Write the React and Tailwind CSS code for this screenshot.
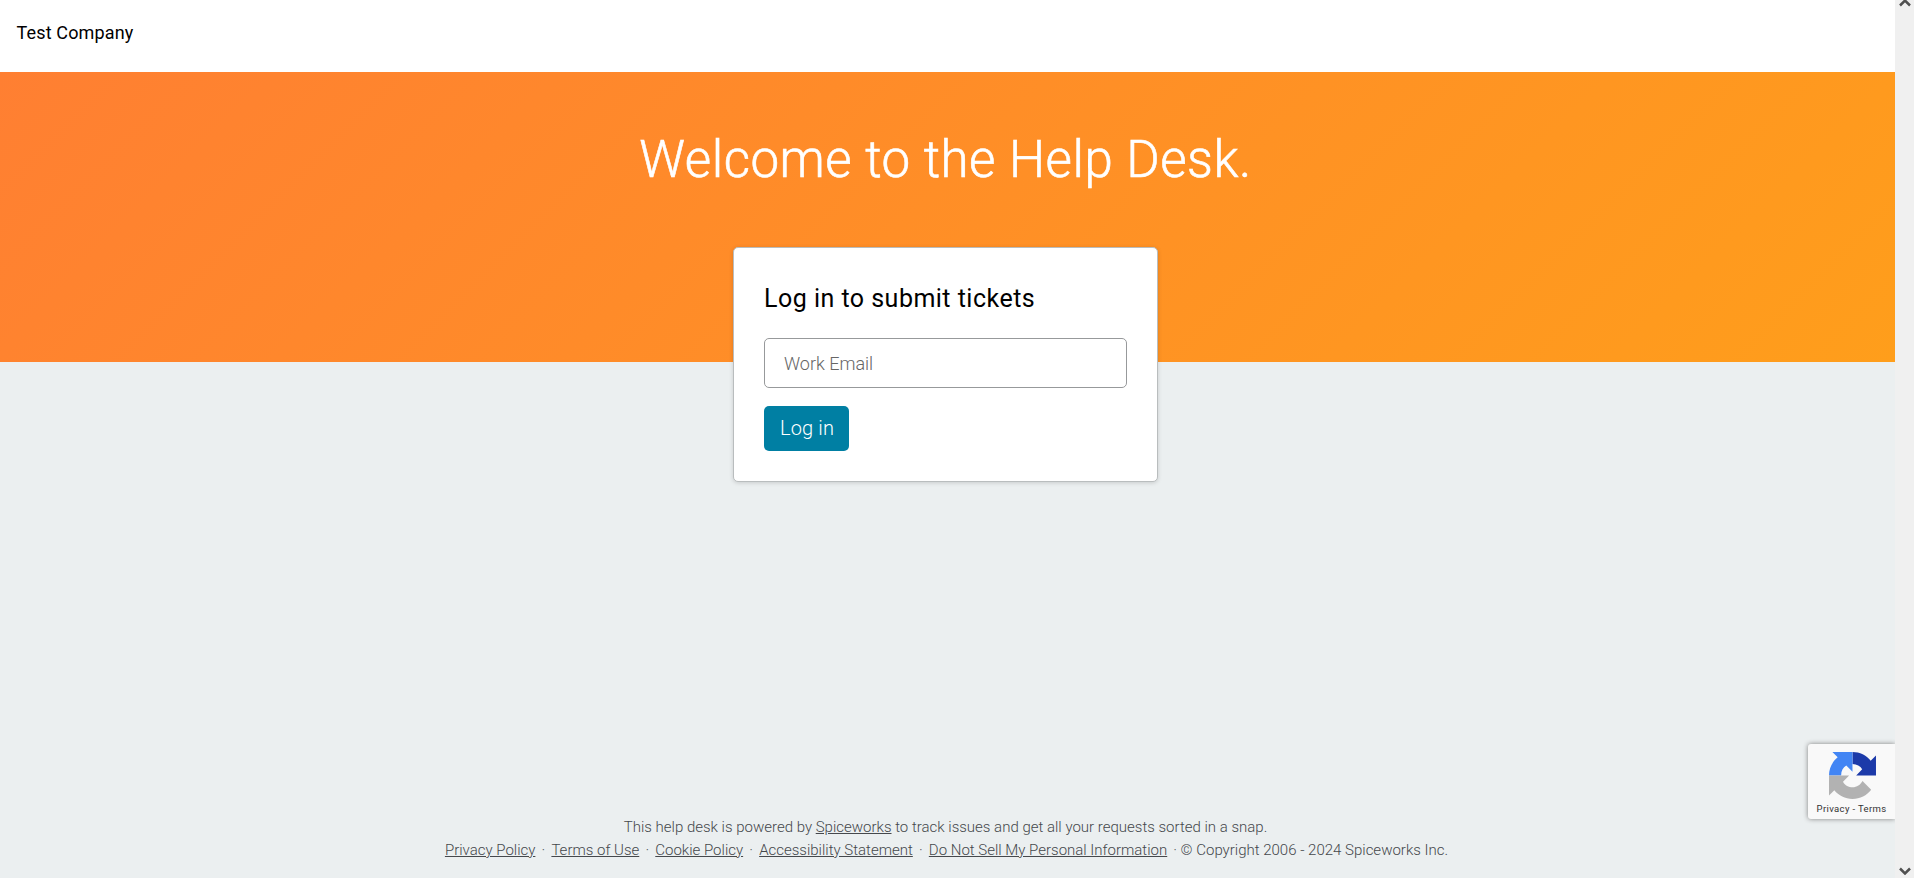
function FooterLink({ children }) {
  return <a href="#" className="underline">{children}</a>;
}

function RecaptchaLogo() {
  return (
    <svg viewBox="0 0 64 64" className="ml-px h-[47px] w-[47px]">
      <path fill="#1c3aa9" d="M64 32c0-.46-.01-.92-.03-1.37V4.600l-7.200 7.200C50.880 4.590 41.970 0 32 0v16.500c6 0 10.500 3 13.200 7l-8.200 8.500z" />
      <path fill="#4285f4" d="M31.860.03H4.610l7.200 7.200C4.600 13.120.01 22 .01 32h16.500c0-6 2.500-11 7-13.500l8.500 8.500z" />
      <path fill="#b2b2b2" d="M.03 32.140v27.250l7.200-7.200C13.120 59.400 22.030 64 32 64c10.380 0 19.600-4.940 25.440-12.600L45.640 39.500c-2.800 5.200-7.700 8.500-13.600 8.500-5.500 0-10-2-13-7.500l8.400-8.360z" />
    </svg>
  );
}

function Scrollbar() {
  return (
    <div className="flex w-[19px] shrink-0 flex-col items-center justify-between overflow-hidden bg-[#f0f0f0] text-[#505050]">
      <svg viewBox="0 0 12 8" className="-mt-px h-2 w-3" fill="none" stroke="currentColor" strokeWidth="2.5">
        <path d="M1 6.500 6 1.500l5 5" />
      </svg>
      <svg viewBox="0 0 12 8" className="mb-[3px] h-2 w-3" fill="none" stroke="currentColor" strokeWidth="2.500">
        <path d="m1 1.500 5 5 5-5" />
      </svg>
    </div>
  );
}

export default function App() {
  return (
    <div className="flex h-[878px] w-[1914px] overflow-hidden bg-[#ebeff0] font-['Roboto',sans-serif] font-light">
      <div className="relative flex w-[1895px] shrink-0 flex-col">
        <header className="h-[72px] shrink-0 bg-white px-[16.500px] pt-[19px]">
          <div className="text-[18px] leading-7 font-normal tracking-[0.15px] text-black">Test Company</div>
        </header>
        <main className="flex h-[290px] shrink-0 flex-col items-center bg-linear-[135deg,#ff7f32,#ff9e1b] pt-[50px] pr-1">
          <h1 className="text-[51px] leading-[76px] tracking-[0.52px] whitespace-nowrap text-white [-webkit-text-stroke:0.6px_white]">Welcome to the Help Desk.</h1>
          <form className="mt-[49px] h-[235px] w-[425px] shrink-0 rounded-[5px] border border-[#b9bdbe] bg-white px-[30px] pt-[33px] shadow-[0_1px_4px_rgba(0,0,0,0.15)]">
            <h2 className="text-[25px] leading-9 font-normal tracking-[0.48px] text-black">Log in to submit tickets</h2>
            <input
              type="email"
              placeholder="Work Email"
              className="mt-[21px] block h-[50px] w-[363px] rounded-[5px] border border-[#97999b] bg-white px-[19px] text-[18px] placeholder:text-[#666]"
            />
            <button type="button" className="mt-[18px] block h-[45px] w-[85px] rounded-[5px] bg-[#007fa3] pb-px pl-px text-[20px] tracking-[0.15px] text-white">Log in</button>
          </form>
        </main>
        <footer className="mt-auto flex shrink-0 flex-col items-center pr-[3px] pb-4 text-[15px] leading-[23px] whitespace-nowrap text-[#45484c]">
          <p className="pr-px">This help desk is powered by <FooterLink>Spiceworks</FooterLink> to track issues and get all your requests sorted in a snap.</p>
          <div className="flex pl-px">
            <FooterLink>Privacy Policy</FooterLink>
            <span className="w-4 text-center">·</span>
            <FooterLink>Terms of Use</FooterLink>
            <span className="w-4 text-center">·</span>
            <FooterLink>Cookie Policy</FooterLink>
            <span className="w-4 text-center">·</span>
            <FooterLink>Accessibility Statement</FooterLink>
            <span className="w-4 text-center">·</span>
            <FooterLink>Do Not Sell My Personal Information</FooterLink>
            <span className="ml-[6px]">· © Copyright 2006 - 2024 Spiceworks Inc.</span>
          </div>
        </footer>
        <div className="absolute top-[744px] right-0 flex h-[75px] w-[87px] flex-col items-center rounded-l-[3px] bg-[#f9f9f9] pt-2 shadow-[0_0_5px_gray] [clip-path:inset(-8px_0_-8px_-8px)]">
          <RecaptchaLogo />
          <div className="mt-[2px] text-[9.500px] leading-4 font-normal tracking-[0.35px] whitespace-nowrap text-[#333]">Privacy - Terms</div>
        </div>
      </div>
      <Scrollbar />
    </div>
  );
}
